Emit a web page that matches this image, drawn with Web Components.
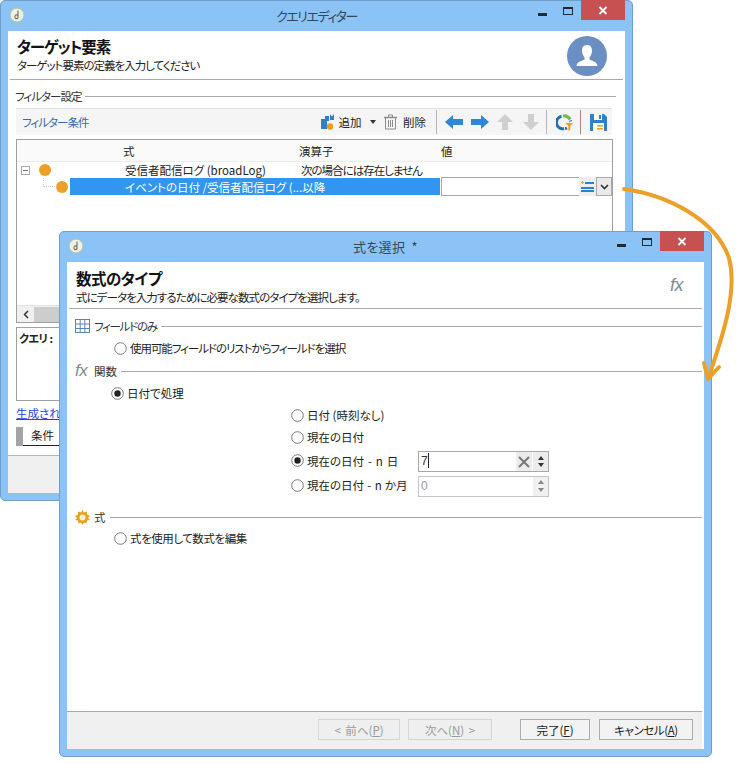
<!DOCTYPE html>
<html lang="ja">
<head>
<meta charset="utf-8">
<title>クエリエディター</title>
<style>
  html, body { margin: 0; padding: 0; background: #fff; }
  body {
    width: 750px; height: 764px; position: relative; overflow: hidden;
    font: 12px/16px "Noto Sans CJK JP", "Noto Sans", sans-serif;
    font-feature-settings: "palt";
    color: #222;
  }
  svg.flow-arrow { position: absolute; left: 0; top: 0; z-index: 5; }
</style>
</head>
<body>

<app-window label="クエリエディター" spacing="-1.5px" style="left:0;top:0;width:633px;height:501px;z-index:1">
  <query-panel></query-panel>
</app-window>

<app-window label="式を選択 &nbsp;*" spacing="0.3px" style="left:59px;top:231px;width:653px;height:526px;z-index:2">
  <expr-panel></expr-panel>
</app-window>

<svg class="flow-arrow" width="750" height="764" viewBox="0 0 750 764" fill="none" stroke="#eda027" stroke-width="4" stroke-linecap="round" stroke-linejoin="round">
  <path d="M624 189C668 195 716 220 729 258C738 292 722 338 709 376"/>
  <path d="M704 363L708 379L719 367"/>
</svg>

<script>
// barra de titulo y marco de ventana
class AppWindow extends HTMLElement {
  constructor() {
    super();
    this.shadow = this.attachShadow({ mode: 'open' });
  }
  connectedCallback() {
    this.shadow.innerHTML = /*HTML*/ `
      <style>
        :host {
          position: absolute; display: flex; flex-direction: column; box-sizing: border-box;
          background: #8bc3f6; border: 1px solid #6f9fcb; border-radius: 5px;
          padding: 0 7px 7px;
        }
        .bar { height: 30px; flex: none; display: flex; align-items: center; position: relative; }
        .logo { margin-left: 1px; margin-top: -2px; }
        .label { position: absolute; left: 0; right: 0; top: 6px; text-align: center; font-size: 13px; line-height: 18px; color: #34475a; letter-spacing: ${this.getAttribute('spacing')}; }
        .ctl { position: absolute; right: 0; top: -1px; display: flex; align-items: flex-start; }
        .min, .max { width: 20px; height: 20px; display: flex; align-items: center; justify-content: center; }
        .min i { display: block; width: 9px; height: 3px; background: #1d2c3a; margin-top: 9px; }
        .max { margin: 0 3px 0 6px; }
        .max i { display: block; box-sizing: border-box; width: 10px; height: 8px; border: 1px solid #1d2c3a; border-top-width: 2px; margin-top: 1px; }
        .close { width: 44px; height: 20px; background: #c75050; display: flex; align-items: center; justify-content: center; }
        .body { flex: 1; min-height: 0; background: #fff; display: flex; flex-direction: column; }
      </style>
      <div class="bar">
        <svg class="logo" width="16" height="16" viewBox="0 0 16 16">
          <circle cx="8" cy="8" r="7" fill="#eef0e4" stroke="#a9c3a0"/>
          <path d="M9 3.5V11M9 8.5C7 7 5.5 8.5 6 10.5C6.5 12 8.5 12 9 10.5" fill="none" stroke="#77705f" stroke-width="1.1"/>
        </svg>
        <span class="label">${this.getAttribute('label')}</span>
        <div class="ctl">
          <div class="min"><i></i></div>
          <div class="max"><i></i></div>
          <div class="close">
            <svg width="10" height="9" viewBox="0 0 10 9"><path d="M1.5 1L8.5 8M8.5 1L1.5 8" stroke="#fff" stroke-width="1.8"/></svg>
          </div>
        </div>
      </div>
      <div class="body"><slot></slot></div>
    `;
  }
}

// encabezado con titulo, subtitulo e icono
class WizardHead extends HTMLElement {
  constructor() {
    super();
    this.attachShadow({ mode: 'open' }).innerHTML = /*HTML*/ `
      <style>
        :host { display: flex; justify-content: space-between; box-sizing: border-box; height: 49px; margin: 0 2px; padding: 5px 7px 0 7px; border-bottom: 1px solid #a9a9a9; }
        h1 { margin: 0 0 1px; font-size: 15.5px; line-height: 20px; font-weight: 700; color: #111; }
        p { margin: 0; font-size: 11.5px; line-height: 16px; color: #222; }
      </style>
      <div><h1><slot name="title"></slot></h1><p><slot name="sub"></slot></p></div>
      <slot name="icon"></slot>
    `;
  }
}

// titulo de seccion con linea a la derecha
class FieldRule extends HTMLElement {
  constructor() {
    super();
    this.attachShadow({ mode: 'open' }).innerHTML = /*HTML*/ `
      <style>
        :host { display: flex; align-items: center; gap: 4px; height: 16px; font-size: 11.5px; color: #333; }
        .line { flex: 1; height: 1px; background: #a9a9a9; }
        ::slotted(svg) { flex: none; }
      </style>
      <slot></slot><div class="line"></div>
    `;
  }
}

class RadioOpt extends HTMLElement {
  constructor() {
    super();
    const on = this.hasAttribute('checked');
    this.attachShadow({ mode: 'open' }).innerHTML = /*HTML*/ `
      <style>
        :host { display: flex; align-items: center; gap: 3px; height: 16px; font-size: 11.5px; color: #222; white-space: nowrap; }
        svg { flex: none; }
      </style>
      <svg width="13" height="13" viewBox="0 0 13 13">
        <circle cx="6.5" cy="6.5" r="5.8" fill="#fff" stroke="#777"/>
        ${on ? '<circle cx="6.5" cy="6.5" r="3.2" fill="#222"/>' : ''}
      </svg>
      <slot></slot>
    `;
  }
}

class SpinField extends HTMLElement {
  constructor() {
    super();
    const off = this.hasAttribute('disabled');
    this.attachShadow({ mode: 'open' }).innerHTML = /*HTML*/ `
      <style>
        :host { display: flex; box-sizing: border-box; width: 131px; height: 21px; margin-top: 2px; border: 1px solid ${off ? '#c4c4c4' : '#a8a8a8'}; background: #fff; font: 12px/19px "Liberation Sans", sans-serif; color: ${off ? '#999' : '#333'}; }
        .val { flex: 1; padding-left: 2px; }
        .caret { display: inline-block; width: 1px; height: 15px; background: #222; vertical-align: -3px; }
        .clear { width: 16px; background: #ececec; display: flex; align-items: center; justify-content: center; }
        .spin { width: 15px; background: ${off ? '#f1f1f1' : '#ececec'}; border-left: 1px solid #fff; display: flex; flex-direction: column; align-items: center; justify-content: space-evenly; }
        .up { width: 0; height: 0; border: 3px solid transparent; border-top: 0; border-bottom: 4px solid ${off ? '#888' : '#333'}; }
        .dn { width: 0; height: 0; border: 3px solid transparent; border-bottom: 0; border-top: 4px solid ${off ? '#888' : '#333'}; }
      </style>
      <div class="val">${this.getAttribute('value')}${off ? '' : '<span class="caret"></span>'}</div>
      ${off ? '' : `<div class="clear"><svg width="12" height="12" viewBox="0 0 12 12"><path d="M1 1L11 11M11 1L1 11" stroke="#777" stroke-width="2"/></svg></div>`}
      <div class="spin"><i class="up"></i><i class="dn"></i></div>
    `;
  }
}

class WizButton extends HTMLElement {
  constructor() {
    super();
    const off = this.hasAttribute('disabled');
    this.attachShadow({ mode: 'open' }).innerHTML = /*HTML*/ `
      <style>
        :host { display: flex; align-items: center; justify-content: center; box-sizing: border-box; height: 21px; font-size: 11.5px;
          border: 1px solid ${off ? '#d5d5d5' : '#adadad'}; background: ${off ? '#efefef' : '#f3f3f3'}; color: ${off ? '#9a9a9a' : '#222'}; white-space: nowrap; }
      </style>
      <slot></slot>
    `;
  }
}

// barra de herramientas del filtro
class FilterToolbar extends HTMLElement {
  constructor() {
    super();
    this.attachShadow({ mode: 'open' }).innerHTML = /*HTML*/ `
      <style>
        :host { display: flex; align-items: center; box-sizing: border-box; height: 27px; background: #f5f5f5; border-top: 1px solid #dedede; padding: 0 5px 0 6px; font-size: 11.5px; color: #222; }
        .name { flex: 1; color: #3a68b0; letter-spacing: -1px; }
        svg { display: block; flex: none; }
        .sep { width: 1px; height: 24px; background: #b5b5b5; flex: none; }
        .caret { width: 0; height: 0; border: 3.5px solid transparent; border-bottom: 0; border-top: 4px solid #333; }
      </style>
      <span class="name">フィルター条件</span>
      <svg width="15" height="17" viewBox="0 0 15 17" style="margin-right:4px">
        <path d="M1 5H5V2H9V7H7V15H1Z" fill="#2f7fcb"/><path d="M10 0L12 2.5L14 0V6H10Z" fill="#2f7fcb"/>
        <circle cx="10" cy="12.5" r="3.2" fill="#ee9c22"/>
      </svg>
      <span>追加</span>
      <i class="caret" style="margin:0 7.5px 0 8px"></i>
      <svg width="15" height="16" viewBox="0 0 15 16" fill="none" stroke="#8d8d8d" style="margin-right:5px">
        <path d="M1 3.5H14" stroke-width="1.5"/><path d="M5.5 3V1H9.5V3"/><path d="M2.5 4V15H12.5V4"/><path d="M5.5 6V13M7.5 6V13M9.5 6V13"/>
      </svg>
      <span>削除</span>
      <i class="sep" style="margin:0 8px 0 10px"></i>
      <svg width="18" height="14" viewBox="0 0 18 14" style="margin-right:8px"><path d="M0 7L8 0V4H18V10H8V14Z" fill="#2e86d6"/></svg>
      <svg width="18" height="14" viewBox="0 0 18 14" style="margin-right:8px"><path d="M18 7L10 0V4H0V10H10V14Z" fill="#2e86d6"/></svg>
      <svg width="16" height="16" viewBox="0 0 16 16" style="margin-right:10px"><path d="M8 0L16 8H11V16H5V8H0Z" fill="#cfcfcf"/></svg>
      <svg width="16" height="16" viewBox="0 0 16 16" style="margin-right:7px"><path d="M8 16L16 8H11V0H5V8H0Z" fill="#cfcfcf"/></svg>
      <i class="sep" style="margin-right:9px"></i>
      <svg width="17" height="17" viewBox="0 0 17 17" fill="none" style="margin-right:7px">
        <path d="M5.5 2.3A6.2 6.2 0 0 0 8 14.7" stroke="#1f6fb8" stroke-width="3"/>
        <path d="M7 2.1A6.2 6.2 0 0 1 14 5.5" stroke="#77b84a" stroke-width="3"/>
        <path d="M14.2 6.5A6.2 6.2 0 0 1 14.5 7.5" stroke="#1f6fb8" stroke-width="3"/>
        <path d="M9 14.6A6 6 0 0 0 11 14" stroke="#1f6fb8" stroke-width="3"/>
        <path d="M9.5 9H17L14.2 12V16.5H12.3V12Z" fill="#ee9c22"/>
      </svg>
      <i class="sep" style="margin-right:9px;background:#a58b7a"></i>
      <svg width="17" height="17" viewBox="0 0 17 17" style="margin-right:0">
        <path d="M0 0H14L17 3V17H0Z" fill="#2f7fcb"/><rect x="4" y="0" width="8" height="6" fill="#fff"/><rect x="9" y="1" width="2" height="4" fill="#2f7fcb"/>
        <rect x="3" y="9" width="11" height="8" fill="#fff"/><rect x="7" y="11" width="6" height="1.5" fill="#ee9c22"/><rect x="7" y="14" width="6" height="1.5" fill="#ee9c22"/>
      </svg>
    `;
  }
}

// arbol de condiciones
class FilterTree extends HTMLElement {
  constructor() {
    super();
    this.attachShadow({ mode: 'open' }).innerHTML = /*HTML*/ `
      <style>
        :host { display: flex; flex-direction: column; box-sizing: border-box; height: 184px; border: 1px solid #a0a0a0; font-size: 11.5px; color: #222; background: #fff; }
        .head { display: flex; height: 21px; align-items: center; background: #fafafa; border-bottom: 1px solid #ececec; flex: none; }
        .head span, .row span { white-space: nowrap; }
        .c1 { width: 106px; } .c2 { width: 176px; } .c3 { width: 140px; }
        .row { display: flex; align-items: center; height: 17px; flex: none; }
        .exp { box-sizing: border-box; width: 9px; height: 9px; margin-left: 4px; border: 1px solid #aaa; display: flex; align-items: center; justify-content: center; }
        .exp i { display: block; width: 5px; height: 1px; background: #777; }
        .dot { width: 12px; height: 12px; border-radius: 50%; background: #eda027; flex: none; }
        .link { position: absolute; left: 26px; top: 0; width: 13px; height: 8px; border-left: 1px dotted #ccc; border-bottom: 1px dotted #ccc; }
        .sel { display: flex; align-items: center; height: 17px; width: 370px; background: #3296f0; color: #fff; box-sizing: border-box; padding-left: 55px; }
        .input { width: 138px; height: 19px; box-sizing: border-box; background: #fff; border: 1px solid #a9a9a9; border-right: 0; margin-left: 1px; }
        .more { width: 17px; height: 19px; background: #eee; display: flex; align-items: center; justify-content: center; }
        .drop { box-sizing: border-box; width: 16px; height: 19px; background: #e9e9e9; border: 1px solid #a9a9a9; display: flex; align-items: center; justify-content: center; }
        .rest { flex: 1; }
        .scroll { flex: none; height: 16px; background: #f0f0f0; display: flex; align-items: center; border-top: 1px solid #e2e2e2; }
        .arrow { width: 17px; display: flex; justify-content: center; }
        .thumb { width: 200px; height: 15px; background: #cdcdcd; }
      </style>
      <div class="head">
        <span class="c1"></span><span class="c2">式</span><span class="c2" style="width:142px">演算子</span><span>値</span>
      </div>
      <div class="row" style="height:16px">
        <span class="exp"><i></i></span>
        <span class="dot" style="margin:0 0 0 9px"></span>
        <span style="width:176px;margin-left:74px">受信者配信ログ (broadLog)</span>
        <span style="letter-spacing:-1px">次の場合には存在しません</span>
      </div>
      <div class="row" style="position:relative">
        <i class="link"></i>
        <span class="dot" style="margin-left:39px"></span>
        <span style="width:1px;margin-right:1px"></span>
        <span class="sel">イベントの日付 /受信者配信ログ (...以降</span>
        <span class="input"></span>
        <span class="more">
          <svg width="13" height="11" viewBox="0 0 13 11"><path d="M4 1H13V3H4ZM0 6H13V8H0ZM0 9H13V11H0Z" fill="#2f7fcb"/><path d="M0 1.5H3M1.5 0V3" stroke="#ee9c22"/></svg>
        </span>
        <span class="drop">
          <svg width="9" height="6" viewBox="0 0 9 6"><path d="M1 1L4.5 4.5L8 1" fill="none" stroke="#333" stroke-width="1.7"/></svg>
        </span>
      </div>
      <div class="rest"></div>
      <div class="scroll">
        <span class="arrow"><svg width="6" height="9" viewBox="0 0 6 9"><path d="M5 1L1.5 4.5L5 8" fill="none" stroke="#333" stroke-width="1.5"/></svg></span>
        <span class="thumb"></span>
      </div>
    `;
  }
}

// contenido de la ventana trasera
class QueryPanel extends HTMLElement {
  constructor() {
    super();
    this.attachShadow({ mode: 'open' }).innerHTML = /*HTML*/ `
      <style>
        :host { display: flex; flex-direction: column; flex: 1; min-height: 0; }
        .avatar { width: 40px; height: 40px; border-radius: 50%; background: #6b8fc2; margin: 0 9px 0 0; display: flex; align-items: center; justify-content: center; }
        .main { padding: 8px 12px 0 8px; flex: 1; display: flex; flex-direction: column; min-height: 0; }
        field-rule { margin-left: -1px; margin-bottom: 4px; margin-right: -3px; }
        filter-toolbar { margin-bottom: 4px; margin-right: 1px; }
        .query { box-sizing: border-box; height: 74px; margin-top: 4px; border: 1px solid #a0a0a0; padding: 2px 2px; font-weight: 700; font-size: 11px; color: #222; letter-spacing: -.5px; }
        .link { margin-top: 4px; height: 17px; font-size: 11.5px; color: #2a3fe0; text-decoration: underline; white-space: nowrap; }
        .tab { display: flex; margin-top: 5px; height: 19px; width: 60px; font-size: 11.5px; }
        .tab i { width: 7px; background: #a4a4a4; }
        .tab span { flex: 1; padding-left: 8px; line-height: 17px; border-bottom: 1px solid #222; }
        .foot { flex: none; height: 37px; background: #f0f0f0; border-top: 1px solid #b5b5b5; margin: 0 -1px 0 0; }
      </style>
      <wizard-head>
        <span slot="title" style="letter-spacing:-1.15px">ターゲット要素</span>
        <span slot="sub" style="letter-spacing:-1px">ターゲット要素の定義を入力してください</span>
        <div slot="icon" class="avatar">
          <svg width="26" height="26" viewBox="0 0 26 26"><path d="M13 2C9 2 8 5 8 8C8 11 9.5 13 10.5 14.5V16.5C8 18 3 18.5 2.5 23H23.5C23 18.5 18 18 15.5 16.5V14.5C16.5 13 18 11 18 8C18 5 17 2 13 2Z" fill="#fff"/></svg>
        </div>
      </wizard-head>
      <div class="main">
        <field-rule><span style="letter-spacing:-1px">フィルター設定</span></field-rule>
        <filter-toolbar></filter-toolbar>
        <filter-tree></filter-tree>
        <div class="query">クエリ :</div>
        <div class="link">生成されたSQL</div>
        <div class="tab"><i></i><span>条件</span></div>
      </div>
      <div class="foot"></div>
    `;
  }
}

// contenido del dialogo delantero
class ExprPanel extends HTMLElement {
  constructor() {
    super();
    this.attachShadow({ mode: 'open' }).innerHTML = /*HTML*/ `
      <style>
        :host { display: flex; flex-direction: column; flex: 1; min-height: 0; }
        wizard-head { height: 47px; padding-top: 6px; }
        .fx { font: italic 17px/20px "Liberation Sans", sans-serif; color: #8a8a8a; letter-spacing: -.5px; }
        .fx-big { margin: 7px 12px 0 0; font-size: 18px; }
        .main { flex: 1; padding: 9px 2px 0 8px; display: flex; flex-direction: column; }
        .r1 { margin: 6px 0 0 39px; }
        .r2 { margin: 7px 0 0 0; }
        .r3 { margin: 6px 0 0 36px; }
        .subs { display: grid; grid-template-columns: 127px 131px; column-gap: 0; margin: 3px 0 0 216px; align-items: center; row-gap: 0; }
        .r4 { margin-top: 12px; }
        .r5 { margin: 5px 0 0 39px; }
        .foot { flex: none; height: 38px; margin: 0 2px 0 0; box-sizing: border-box; background: #f0f0f0; border-top: 1px solid #a9a9a9; padding: 7px 9px 0 0; display: flex; justify-content: flex-end; }
      </style>
      <wizard-head>
        <span slot="title" style="letter-spacing:-.5px">数式のタイプ</span>
        <span slot="sub" style="letter-spacing:-.93px">式にデータを入力するために必要な数式のタイプを選択します。</span>
        <span slot="icon" class="fx fx-big">fx</span>
      </wizard-head>
      <div class="main">
        <field-rule>
          <svg width="15" height="14" viewBox="0 0 15 14" fill="#fff" stroke="#5a83b8"><rect x=".5" y=".5" width="14" height="13"/><path d="M5.2 1V13M9.8 1V13M1 5H14M1 9.5H14"/></svg>
          <span style="letter-spacing:-1.3px">フィールドのみ</span>
        </field-rule>
        <radio-opt class="r1"><span style="letter-spacing:-1.05px">使用可能フィールドのリストからフィールドを選択</span></radio-opt>
        <field-rule class="r2">
          <span class="fx" style="width:15px">fx</span>
          <span>関数</span>
        </field-rule>
        <radio-opt class="r3" checked>日付で処理</radio-opt>
        <div class="subs">
          <radio-opt style="height:22px;grid-column:1 / 3">日付 (時刻なし)</radio-opt>
          <radio-opt style="height:22px;grid-column:1 / 3">現在の日付</radio-opt>
          <radio-opt style="height:25px" checked><span style="word-spacing:1.3px">現在の日付 - n 日</span></radio-opt>
          <spin-field value="7"></spin-field>
          <radio-opt style="height:24px"><span style="word-spacing:.7px">現在の日付 - n か月</span></radio-opt>
          <spin-field value="0" disabled></spin-field>
        </div>
        <field-rule class="r4">
          <svg width="15" height="15" viewBox="0 0 15 15"><path d="M7.5 0L9 2.5L12 1.5L12 4.5L15 6L13 8L15 10L12 10.5L11.5 13.5L9 12.5L7.5 15L6 12.5L3.5 13.5L3 10.5L0 10L2 8L0 6L3 4.5L3 1.5L6 2.5Z" fill="#e9a020"/><circle cx="7.5" cy="7.5" r="3" fill="#fff2cf"/></svg>
          <span>式</span>
        </field-rule>
        <radio-opt class="r5"><span style="letter-spacing:-.45px">式を使用して数式を編集</span></radio-opt>
      </div>
      <div class="foot">
        <wiz-button disabled style="width:82px;word-spacing:2px">&lt; 前へ(<u>P</u>)</wiz-button>
        <wiz-button disabled style="width:84px;margin-left:8px;word-spacing:2px">次へ(<u>N</u>) &gt;</wiz-button>
        <wiz-button style="width:70px;margin-left:28px">完了(<u>F</u>)</wiz-button>
        <wiz-button style="width:94px;margin-left:9px;letter-spacing:-.4px">キャンセル(<u>A</u>)</wiz-button>
      </div>
    `;
  }
}

customElements.define('app-window', AppWindow);
customElements.define('wizard-head', WizardHead);
customElements.define('field-rule', FieldRule);
customElements.define('radio-opt', RadioOpt);
customElements.define('spin-field', SpinField);
customElements.define('wiz-button', WizButton);
customElements.define('filter-toolbar', FilterToolbar);
customElements.define('filter-tree', FilterTree);
customElements.define('query-panel', QueryPanel);
customElements.define('expr-panel', ExprPanel);
</script>
</body>
</html>
